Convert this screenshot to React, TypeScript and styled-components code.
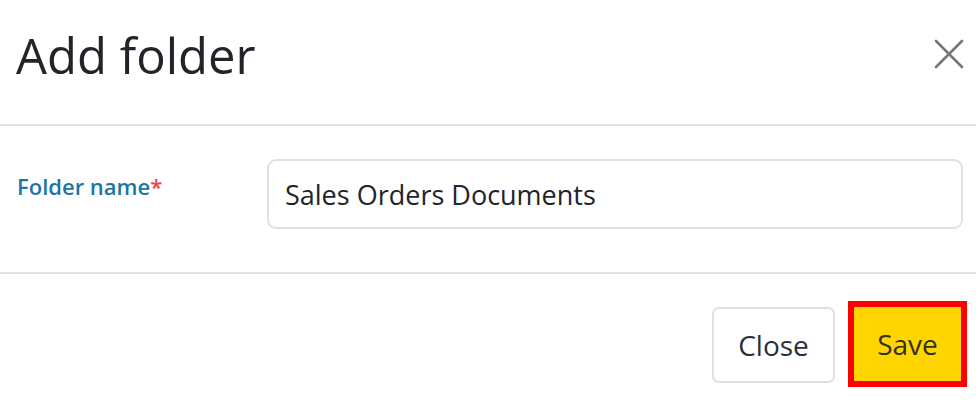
import styled, { createGlobalStyle } from "styled-components";

const GlobalStyle = createGlobalStyle`
  html, body {
    margin: 0;
    padding: 0;
    background: #ffffff;
  }
  body {
    font-family: "Open Sans", "Noto Sans", sans-serif;
    color: #212529;
  }
`;

const Modal = styled.div`
  width: 976px;
  height: 402px;
  display: flex;
  flex-direction: column;
  background: #fff;
  overflow: hidden;
`;

const Header = styled.div`
  height: 126px;
  box-sizing: border-box;
  display: flex;
  align-items: flex-start;
  justify-content: space-between;
  padding: 31px 11px 0 16px;
  border-bottom: 2px solid #dee2e6;
`;

const Title = styled.h5`
  margin: 0;
  font-size: 49px;
  line-height: 1;
  font-weight: 400;
  color: #212529;
`;

const CloseIcon = styled.button`
  width: 32px;
  height: 32px;
  margin-top: 7px;
  padding: 0;
  border: none;
  background: transparent;
  display: flex;
  align-items: center;
  justify-content: center;
  cursor: pointer;
`;

const Body = styled.div`
  height: 148px;
  box-sizing: border-box;
  display: flex;
  align-items: flex-start;
  padding: 33px 13px 0 17px;
  border-bottom: 2px solid #dee2e6;
`;

const Label = styled.label`
  width: 250px;
  flex-shrink: 0;
  padding-top: 12px;
  font-size: 22px;
  font-weight: 600;
  color: #1b75a6;
`;

const Required = styled.span`
  color: #e8474f;
`;

const Input = styled.input`
  flex: 1;
  height: 70px;
  box-sizing: border-box;
  border: 2px solid #dde1e6;
  border-radius: 9px;
  padding: 0 16px;
  font-family: "Open Sans", "Noto Sans", sans-serif;
  font-size: 27px;
  color: #212529;
  outline: none;
`;

const Footer = styled.div`
  flex: 1;
  display: flex;
  justify-content: flex-end;
  align-items: flex-start;
  gap: 13px;
  padding: 27px 9px 0 0;
`;

const Button = styled.button<{ $primary?: boolean }>`
  box-sizing: border-box;
  padding: 0;
  font-family: "Open Sans", "Noto Sans", sans-serif;
  font-size: 28px;
  cursor: pointer;
  color: ${(p) => (p.$primary ? "#333018" : "#2b2d3c")};
  background: ${(p) => (p.$primary ? "#ffd500" : "#ffffff")};
  border: ${(p) => (p.$primary ? "6px solid #ff0000" : "2px solid #dde1e6")};
  border-radius: ${(p) => (p.$primary ? "0" : "7px")};
  width: ${(p) => (p.$primary ? "119px" : "123px")};
  height: ${(p) => (p.$primary ? "86px" : "76px")};
  margin-top: ${(p) => (p.$primary ? "0" : "6px")};
`;

export default function App() {
  return (
    <>
      <GlobalStyle />
      <Modal>
        <Header>
          <Title>Add folder</Title>
          <CloseIcon aria-label="Close">
            <svg width="30" height="30" viewBox="0 0 30 30">
              <path
                d="M2 2 L28 28 M28 2 L2 28"
                stroke="#777777"
                strokeWidth="2.6"
                strokeLinecap="round"
              />
            </svg>
          </CloseIcon>
        </Header>
        <Body>
          <Label>
            Folder name<Required>*</Required>
          </Label>
          <Input defaultValue="Sales Orders Documents" />
        </Body>
        <Footer>
          <Button>Close</Button>
          <Button $primary>Save</Button>
        </Footer>
      </Modal>
    </>
  );
}
